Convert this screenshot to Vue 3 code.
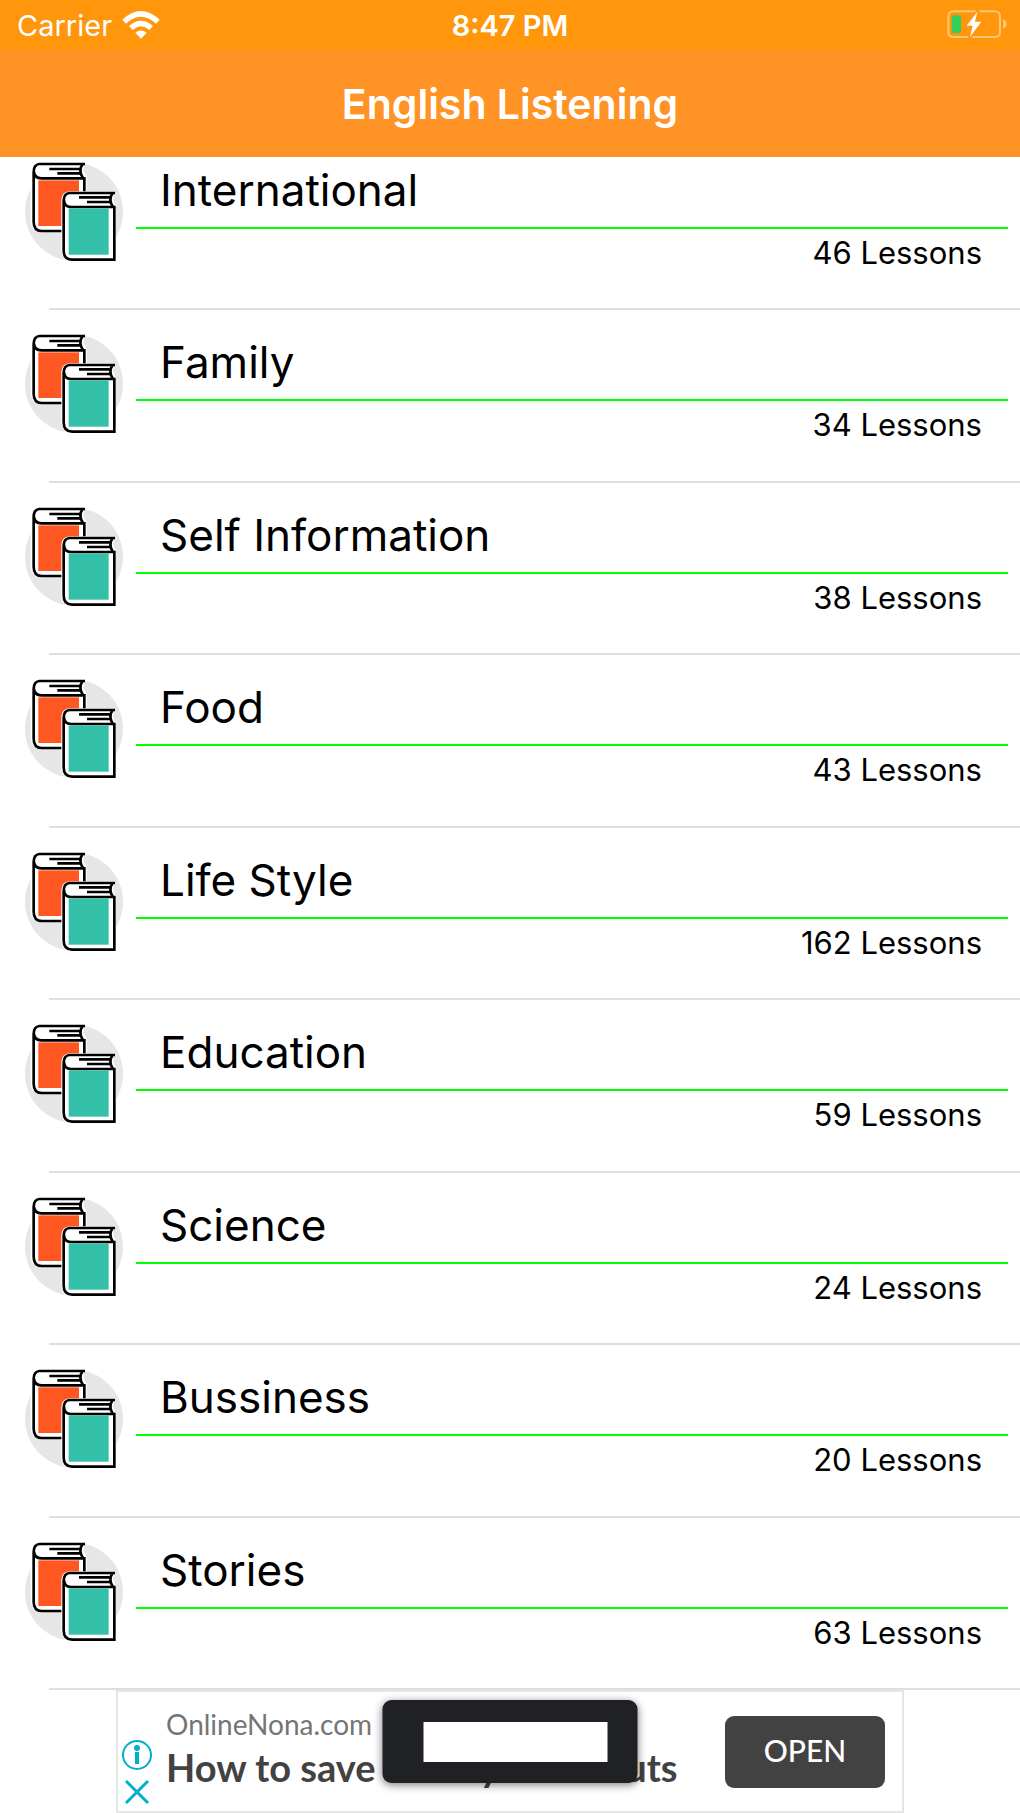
<template>
    <div class="app">
        <header class="top">
            <div class="status">
                <div class="carrier">
                    <span>Carrier</span>
                    <svg class="wifi" viewBox="0 0 112 84" aria-hidden="true">
                        <path d="M0 26 Q56 -26 112 26 L101 38 Q56 -4 11 38 Z" />
                        <path d="M20 45 Q56 13 92 45 L81 57 Q56 35 31 57 Z" />
                        <path d="M39 65 Q56 52 73 65 L56 83 Z" />
                    </svg>
                </div>
                <span class="time">8:47 PM</span>
                <svg class="battery" viewBox="0 0 180 90" aria-hidden="true">
                    <path class="case" d="M86 4 H20 Q4 4 4 20 V65 Q4 81 20 81 H64 M98 4 H143 Q159 4 159 20 V65 Q159 81 143 81 H76" />
                    <path class="cap" d="M168 27 Q179 33 179 42 Q179 51 168 57 Z" />
                    <rect class="level" x="14" y="16" width="28" height="54" rx="9" />
                    <path class="bolt" d="M91 5 L59 47 H77 L69 81 L103 35 H84 Z" />
                </svg>
            </div>
            <h1>English Listening</h1>
        </header>

        <ul class="topics">
            <li v-for="topic in topics" :key="topic.name">
                <a href="#" class="topic">
                    <svg class="books" viewBox="42 36 300 300" aria-hidden="true">
                        <circle cx="192" cy="185" r="147" fill="#e6e6e6" />
                        <path d="M60 36 H224 L220 62 L230 80 V246 H90 Q62 242 62 214 V62 Z" fill="#fff" />
                        <path d="M225 42 H88 Q71 44 71 66 V215 Q71 243 96 243 H160 M72 66 Q74 85 94 85 H223 V126" class="ink" />
                        <path d="M218 41 Q204 62 219 84" class="ink" />
                        <path d="M118 57 H211 M142 70 H211" class="ink" />
                        <rect x="85" y="91" width="122" height="137" fill="#ff5722" />
                        <path d="M180 124 H314 L309 148 L318 168 V333 H180 Q154 330 154 300 V150 Q154 126 180 124 Z" fill="#fff" />
                        <path d="M315 129 H178 Q161 131 161 153 V301 Q161 329 186 329 H313 V171 H183 Q162 171 162 150" class="ink" />
                        <path d="M308 128 Q294 149 309 171" class="ink" />
                        <path d="M207 142 H301 M231 156 H301" class="ink" />
                        <rect x="176" y="175" width="120" height="139" fill="#34bfa8" />
                    </svg>
                    <div class="info">
                        <h2>{{ topic.name }}</h2>
                        <p>{{ topic.lessons }} Lessons</p>
                    </div>
                </a>
            </li>
        </ul>

        <footer class="bottom">
            <div class="ad">
                <div class="ad-tools">
                    <button type="button" aria-label="Ad information">
                        <svg viewBox="0 0 30 30">
                            <circle cx="15" cy="15" r="14" class="line" />
                            <circle cx="15" cy="8" r="3" />
                            <path d="M13 12 H17 V24 H13 Z" />
                        </svg>
                    </button>
                    <button type="button" aria-label="Close ad">
                        <svg viewBox="0 0 30 30">
                            <path d="M4 4 L26 26 M26 4 L4 26" class="line cross" />
                        </svg>
                    </button>
                </div>
                <div class="ad-text">
                    <p class="ad-site">OnlineNona.com</p>
                    <p class="ad-title">How to save money on donuts</p>
                </div>
                <button type="button" class="open">OPEN</button>
            </div>
            <div class="toast"><div class="toast-body"></div></div>
        </footer>
    </div>
</template>

<script setup>
import { ref } from 'vue';

const topics = ref([
    { name: 'International', lessons: 46 },
    { name: 'Family', lessons: 34 },
    { name: 'Self Information', lessons: 38 },
    { name: 'Food', lessons: 43 },
    { name: 'Life Style', lessons: 162 },
    { name: 'Education', lessons: 59 },
    { name: 'Science', lessons: 24 },
    { name: 'Bussiness', lessons: 20 },
    { name: 'Stories', lessons: 63 },
]);
</script>

<style>
body {
    margin: 0;
    background-color: #fff;
}
</style>

<style scoped>
.app {
    display: flex;
    flex-direction: column;
    min-height: 100vh;
    font-family: Inter, "Liberation Sans", sans-serif;
    color: #000;
}

h1,
h2,
p {
    margin: 0;
    font-weight: 400;
}

/* header */
.top {
    position: relative;
    z-index: 1;
    background-color: #ff9326;
    color: #fff;
}

.status {
    display: grid;
    grid-template-columns: 1fr auto 1fr;
    align-items: center;
    height: 50px;
    padding: 0 13px;
    background-color: #ff960c;
    font-size: 29px;
}

.carrier {
    display: flex;
    align-items: center;
    gap: 10px;
    padding-left: 4px;
}

.wifi {
    width: 38px;
    height: 28px;
    fill: #fff;
}

.time {
    font-weight: 600;
}

.battery {
    justify-self: end;
    width: 60px;
    height: 30px;
}

.case {
    fill: none;
    stroke: #ffc576;
    stroke-width: 6;
}

.cap {
    fill: #ffc576;
}

.level {
    fill: #30d158;
}

.bolt {
    fill: #fff;
}

h1 {
    height: 107px;
    line-height: 108px;
    text-align: center;
    font-size: 41px;
    font-weight: 600;
}

/* the list is scrolled a little way under the header */
.topics {
    flex: 1;
    display: grid;
    grid-auto-rows: 1fr;
    margin: -19px 0 0;
    padding: 0;
    list-style: none;
}

.topics li {
    min-height: 160px;
    background: linear-gradient(#dedede, #dedede) 49px 100% / 100% 2px no-repeat;
}

.topic {
    display: flex;
    gap: 12px;
    padding: 24px 12px 0 24px;
    color: inherit;
    text-decoration: none;
}

.books {
    flex: none;
    width: 100px;
    height: 100px;
}

.ink {
    fill: none;
    stroke: #000;
    stroke-width: 8;
}

.info {
    flex: 1;
}

h2 {
    height: 65px;
    padding-left: 24px;
    border-bottom: 2px solid #0f0;
    font-size: 44px;
    line-height: 56px;
}

.info p {
    padding-right: 26px;
    text-align: right;
    font-size: 31px;
    line-height: 48px;
}

/* ad banner */
.bottom {
    position: relative;
    font-family: Lato, "Liberation Sans", sans-serif;
}

.ad {
    display: flex;
    box-sizing: border-box;
    max-width: 788px;
    height: 123px;
    margin: 0 auto;
    padding: 0 17px 0 4px;
    border: 2px solid #e4e6e7;
}

.ad-tools {
    display: flex;
    flex-direction: column;
    justify-content: flex-end;
    gap: 7px;
    padding-bottom: 4px;
}

.ad-tools button {
    width: 30px;
    height: 30px;
    padding: 0;
    border: none;
    background: none;
    cursor: pointer;
}

.ad-tools svg {
    display: block;
    fill: #00aecd;
}

.ad-tools .line {
    fill: none;
    stroke: #00aecd;
    stroke-width: 2;
}

.ad-tools .cross {
    stroke-width: 3;
}

.ad-text {
    flex: 1;
    padding: 14px 0 0 14px;
    white-space: nowrap;
}

.ad-site {
    color: #757575;
    font-size: 28px;
    line-height: 36px;
}

.ad-title {
    color: #424242;
    font-size: 38px;
    font-weight: 700;
    line-height: 50px;
}

.open {
    align-self: center;
    width: 160px;
    height: 72px;
    padding: 0 0 4px;
    border: none;
    border-radius: 9px;
    background-color: #424242;
    color: #fff;
    font-family: inherit;
    font-size: 30px;
    font-weight: 500;
    cursor: pointer;
}

.toast {
    position: absolute;
    top: 10px;
    left: 50%;
    transform: translateX(-50%);
    padding: 22px 30px 21px 41px;
    border-radius: 9px;
    background-color: #202124;
    box-shadow: 0 2px 8px rgba(0, 0, 0, 0.5);
}

.toast-body {
    width: 184px;
    height: 40px;
    background-color: #fff;
}
</style>
